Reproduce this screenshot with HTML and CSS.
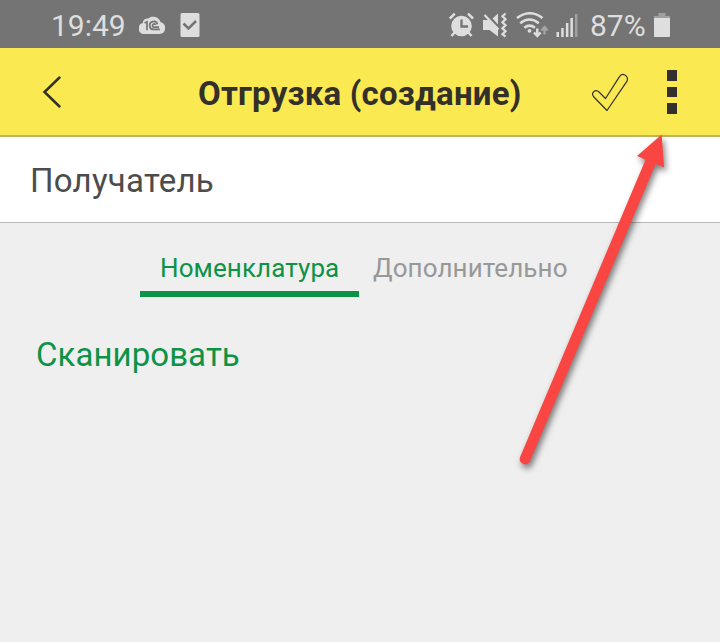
FILE: index.html
```html
<!DOCTYPE html>
<html lang="ru">
<head>
<meta charset="utf-8">
<title>Отгрузка (создание)</title>
<link rel="stylesheet" href="styles.css">
</head>
<body>
<div class="screen">
  <div class="status">
    <span class="clock">19:49</span>
    <svg class="cloud" width="26" height="18" viewBox="0 0 26 18">
      <path fill="#dedede" d="M5.500 18a5.600 5.600 0 0 1-1.700-11 4.500 4.500 0 0 1 5.400-4.400 7.600 7.600 0 0 1 12.400 3.600A6 6 0 0 1 20.500 18z"/>
      <path fill="none" stroke="#747474" stroke-width="1.700" d="M5.500 7l2.500-1.200v8.400M18.500 8.200a4 4 0 1 0-3.200 5.200h5.500M16.700 8.800a1.700 1.700 0 1 0-1.200 2.400h4.500"/>
    </svg>
    <svg class="task" width="20" height="24" viewBox="0 0 20 24">
      <rect x=".5" width="19" height="24" rx="1.500" fill="#dedede"/>
      <path fill="none" stroke="#747474" stroke-width="2.500" d="M3.500 10.500l5 5 7.500-7.500"/>
    </svg>
    <svg class="alarm" width="26" height="26" viewBox="0 0 26 26">
      <circle cx="12.500" cy="14" r="10.300" fill="#dedede"/>
      <path fill="none" stroke="#dedede" stroke-width="2.500" d="M.8 6.500l5-4.800M19 1.700l5 4.800M6 20l-3.500 4M19 20l3.500 4"/>
      <path fill="none" stroke="#747474" stroke-width="2.300" d="M12.500 7.500v7h6.500"/>
    </svg>
    <svg class="mute" width="25" height="26" viewBox="0 0 25 26">
      <path fill="#dedede" d="M0 8h5.500l9.500 9v7.500L6.500 18H0zM9.500 6.500l5.500-5v11z"/>
      <path fill="none" stroke="#dedede" stroke-width="2.300" d="M1.500 3l14 14.500M22.500 1.500l-3 2.700 3 3-3 3 3 3-3 3 3 3-3 3 3 2.500"/>
    </svg>
    <svg class="wifi" width="33" height="26" viewBox="0 0 33 26">
      <g fill="none" stroke="#dedede" stroke-width="2.500">
        <path d="M1 6q13-9.500 25.500 0M4.200 11.200q9.300-7.500 18.600 0M8.300 15.800q5.300-4.300 10.600 0"/>
        <path d="M21.300 16.500v7M18 20.500l3.300 3.500 3.300-3.500"/>
      </g>
      <circle cx="13.500" cy="18.800" r="1.900" fill="#dedede"/>
      <path fill="none" stroke="#a5a5a5" stroke-width="2.300" d="M28.500 22.500v-7M25.500 18.500l3-3.500 3 3.500"/>
    </svg>
    <svg class="signal" width="23" height="24" viewBox="0 0 23 24">
      <path fill="#dedede" d="M.5 19H3v5H.5zM5.200 15h2.500v9H5.200zM9.900 10h2.500v14H9.900zM14.400 5h2.500v19h-2.500z"/>
      <path fill="#a0a0a0" d="M19 1h2.500v23H19z"/>
    </svg>
    <span class="percent">87%</span>
    <svg class="battery" width="16" height="24" viewBox="0 0 16 24">
      <path fill="#a0a0a0" d="M4.500 0h7v3H16v3H0V3h4.500z"/>
      <path fill="#dedede" d="M0 5h16v18a1 1 0 0 1-1 1H1a1 1 0 0 1-1-1z"/>
    </svg>
  </div>
  <header class="bar">
    <svg class="back" width="20" height="34" viewBox="0 0 20 34">
      <path fill="none" stroke="#33302a" stroke-width="2.500" stroke-linecap="round" d="M17.500 2.500L2.500 17l15 14.500"/>
    </svg>
    <h1 class="title">Отгрузка (создание)</h1>
    <svg class="done" width="40" height="40" viewBox="0 0 40 40">
      <path fill="none" stroke="#33302a" stroke-width="1.200" stroke-linejoin="round" d="M17 38.500L3.400 24.500C.8 20.500 5.600 16.800 9 20l6.500 6.500L29.500 4.600c2.500-4.500 9.300-1.300 7.700 4.200z"/>
    </svg>
    <div class="more"><i></i><i></i><i></i></div>
  </header>
  <div class="field"><span class="field-label">Получатель</span></div>
  <nav class="tabs">
    <a class="tab active">Номенклатура</a>
    <a class="tab second">Дополнительно</a>
  </nav>
  <div class="scan"><span class="scan-label">Сканировать</span></div>
  <svg class="arrow" width="720" height="642" viewBox="0 0 720 642">
    <path fill="#f94642" d="M661.700 134.500L664 167.500 655.700 164 529.800 461.600A5.400 5.400 0 0 1 520 457.300L645.500 159.700 637 156z"/>
  </svg>
</div>
</body>
</html>
```
FILE: styles.css
```css
* { box-sizing: border-box; }
body { margin: 0; font-family: Roboto, "Liberation Sans", sans-serif; }
.screen { position: relative; width: 720px; height: 642px; overflow: hidden; background: #efefef; }
svg { display: block; flex: none; }
span, h1, a { white-space: nowrap; }

.status { display: flex; align-items: flex-start; height: 48px; background: #747474; color: #dedede; font-size: 30px; line-height: 35px; }
.clock, .percent { flex: none; padding-top: 8px; }
.clock { width: 88px; margin-left: 51px; }
.cloud { margin-top: 16px; }
.task { margin: 13px 0 0 15px; }
.alarm { margin: 12px 0 0 249px; }
.mute { margin: 12px 0 0 8px; }
.wifi { margin: 12px 0 0 8px; }
.signal { margin: 13px 0 0 7px; }
.percent { width: 64px; margin-left: 11px; }
.battery { margin-top: 13px; }

.bar { display: flex; align-items: flex-start; height: 89px; background: #fae950; border-bottom: 2px solid #c0b45f; color: #33302a; }
.back { margin: 27px 0 0 42px; }
.title { width: 394px; margin: 26px 0 0 136px; font-size: 33px; font-weight: 700; line-height: 39px; letter-spacing: .22px; }
.done { margin: 24px 0 0 -2px; }
.more { display: grid; gap: 6px; margin: 22px 0 0 37px; }
.more i { width: 10px; height: 11px; background: #33302f; }
.more i:nth-child(2) { height: 10px; }

.field { height: 86px; padding: 24px 30px 0; background: #fff; border-bottom: 1px solid #b8b8b8; color: #4c4c4c; font-size: 33px; line-height: 39px; letter-spacing: .25px; }
.tabs { display: flex; height: 74px; padding: 21px 0 0 140px; font-size: 26px; line-height: 48px; letter-spacing: .1px; color: #989898; }
.tab { height: 53px; }
.active { width: 219px; padding-left: 20px; border-bottom: 6px solid #0c9347; color: #0c9347; }
.second { margin-left: 14px; }
.scan { padding: 38px 36px 0; color: #0c9347; font-size: 33px; line-height: 39px; letter-spacing: .07px; }
.arrow { position: absolute; top: 0; left: 0; filter: drop-shadow(2px 4px 3px rgba(0, 0, 0, .5)); pointer-events: none; }
```
